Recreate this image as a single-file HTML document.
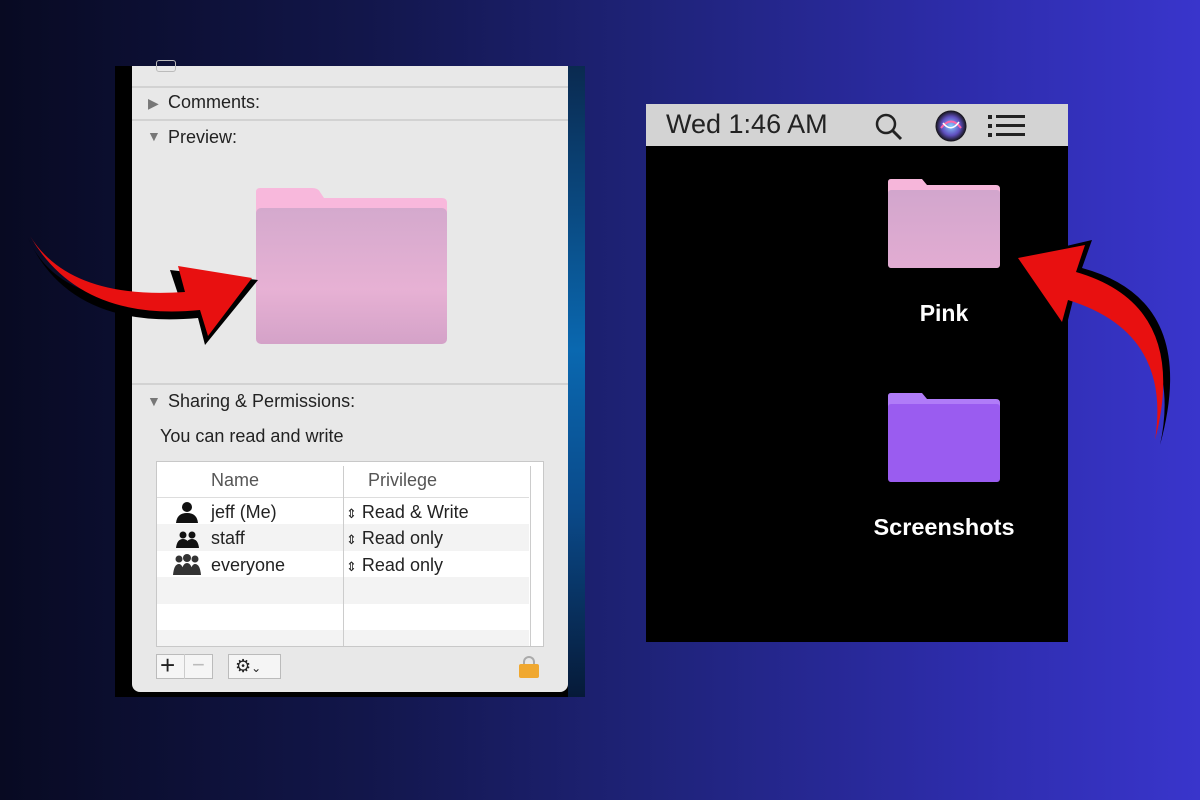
<!DOCTYPE html>
<html><head><style>
*{margin:0;padding:0;box-sizing:border-box}
body{width:1200px;height:800px;overflow:hidden;position:relative;font-family:"Liberation Sans",sans-serif;
background:linear-gradient(90deg,#080a22 0%,#12164a 30%,#1f237a 55%,#2d2caa 80%,#3935cc 100%);}
.abs{position:absolute}
.frame{left:115px;top:66px;width:470px;height:631px;background:#000}
.blue{left:568px;top:66px;width:17px;height:631px;background:linear-gradient(180deg,#0a2a50,#0a68b0 45%,#0a4a8a 70%,#061a38)}
.panel{left:132px;top:66px;width:436px;height:626px;background:#e8e8e8;border-radius:0 0 8px 8px;color:#222;font-size:18px}
.hr{position:absolute;left:0;right:0;height:2px;background:#d2d2d2}
.tri{position:absolute;color:#777;font-size:14px}
.tbl{position:absolute;left:24px;top:395px;width:388px;height:186px;background:#fff;border:1px solid #c8c8c8;overflow:hidden}
.row{position:absolute;left:0;width:372px;height:26.5px}
.menubar{left:646px;top:104px;width:422px;height:42px;background:#d3d3d3;font-size:27px;color:#222}
.desk{left:646px;top:146px;width:422px;height:496px;background:#000}
</style></head><body>
<div class="abs frame"></div>
<div class="abs blue"></div>
<div class="abs panel">
  <div style="position:absolute;left:24px;top:-6px;width:20px;height:12px;border:1px solid #bbb;border-radius:3px"></div>
  <div class="hr" style="top:20px"></div>
  <span class="tri" style="left:16px;top:29px">▶</span><span style="position:absolute;left:36px;top:26px">Comments:</span>
  <div class="hr" style="top:53px"></div>
  <span class="tri" style="left:15px;top:62px">▼</span><span style="position:absolute;left:36px;top:61px">Preview:</span>
  <svg style="position:absolute;left:118px;top:120px" width="200" height="160">
    <defs><linearGradient id="pf" x1="0" y1="0" x2="0" y2="1"><stop offset="0" stop-color="#d4a9cd"/><stop offset=".6" stop-color="#e7b1d4"/><stop offset="1" stop-color="#d4a2c8"/></linearGradient></defs>
    <path d="M6 6 Q6 2 10 2 H62 Q68 2 70 6 L74 12 H192 Q197 12 197 17 V40 H6Z" fill="#f8b8dc"/>
    <rect x="6" y="22" width="191" height="136" rx="5" fill="url(#pf)"/>
  </svg>
  <div class="hr" style="top:317px"></div>
  <span class="tri" style="left:15px;top:327px">▼</span><span style="position:absolute;left:36px;top:325px">Sharing &amp; Permissions:</span>
  <span style="position:absolute;left:28px;top:360px">You can read and write</span>
  <div class="tbl">
    <div style="position:absolute;left:0;top:0;width:372px;height:36px;border-bottom:1px solid #ddd"></div>
    <span style="position:absolute;left:54px;top:8px;color:#555">Name</span>
    <span style="position:absolute;left:211px;top:8px;color:#555">Privilege</span>
    <div class="row" style="top:36px"></div>
    <div class="row" style="top:62px;background:#f3f3f3"></div>
    <div class="row" style="top:89px"></div>
    <div class="row" style="top:115px;background:#f3f3f3"></div>
    <div class="row" style="top:142px"></div>
    <div class="row" style="top:168px;background:#f3f3f3"></div>
    <div style="position:absolute;left:186px;top:4px;width:1px;height:180px;background:#ccc"></div>
    <div style="position:absolute;left:373px;top:4px;width:1px;height:180px;background:#ccc"></div>
    <svg style="position:absolute;left:16px;top:39px" width="30" height="80">
      <circle cx="14" cy="6" r="5" fill="#111"/><path d="M3 22 Q4 12 14 12 Q24 12 25 22Z" fill="#111"/>
      <circle cx="10" cy="34" r="3.5" fill="#111"/><circle cx="19" cy="34" r="3.5" fill="#111"/><path d="M3 47 Q4 38 10 38 Q16 38 17 47Z M12 47 Q13 38 19 38 Q25 38 26 47Z" fill="#111"/>
      <circle cx="6" cy="58" r="3.5" fill="#333"/><circle cx="14" cy="57" r="4" fill="#333"/><circle cx="22" cy="58" r="3.5" fill="#333"/><path d="M0 74 Q1 63 6 63 Q10 63 11 74Z M8 74 Q9 62 14 62 Q19 62 20 74Z M17 74 Q18 63 22 63 Q27 63 28 74Z" fill="#333"/>
    </svg>
    <span style="position:absolute;left:54px;top:40px">jeff (Me)</span>
    <span style="position:absolute;left:54px;top:66px">staff</span>
    <span style="position:absolute;left:54px;top:93px">everyone</span>
    <span style="position:absolute;left:189px;top:40px"><small style="font-size:13px">⇕</small> Read &amp; Write</span>
    <span style="position:absolute;left:189px;top:66px"><small style="font-size:13px">⇕</small> Read only</span>
    <span style="position:absolute;left:189px;top:93px"><small style="font-size:13px">⇕</small> Read only</span>
  </div>
  <div style="position:absolute;left:24px;top:588px;width:57px;height:25px;border:1px solid #bbb;background:#f5f5f5"></div>
  <div style="position:absolute;left:52px;top:588px;width:1px;height:25px;background:#ccc"></div>
  <span style="position:absolute;left:28px;top:584px;font-size:26px;color:#222">+</span>
  <span style="position:absolute;left:60px;top:586px;font-size:22px;color:#bbb">−</span>
  <div style="position:absolute;left:96px;top:588px;width:53px;height:25px;border:1px solid #bbb;background:#f5f5f5;font-size:18px;padding:1px 0 0 6px">⚙<span style="font-size:12px">⌄</span></div>
  <div style="position:absolute;left:387px;top:590px;width:20px;height:22px">
    <div style="position:absolute;left:4px;top:0;width:12px;height:12px;border:2px solid #aaa;border-bottom:none;border-radius:6px 6px 0 0"></div>
    <div style="position:absolute;left:0;top:8px;width:20px;height:14px;background:#f0a830;border-radius:2px"></div>
  </div>
</div>

<div class="abs menubar">
  <span style="position:absolute;left:20px;top:5px">Wed 1:46 AM</span>
  <svg style="position:absolute;left:228px;top:8px" width="30" height="30"><circle cx="12" cy="12" r="9" fill="none" stroke="#222" stroke-width="2.5"/><path d="M18 18 L27 27" stroke="#222" stroke-width="3"/></svg>
  <svg style="position:absolute;left:288px;top:5px" width="34" height="34"><defs><radialGradient id="sr"><stop offset="0" stop-color="#8cf"/><stop offset=".6" stop-color="#6050c0"/><stop offset="1" stop-color="#111"/></radialGradient></defs><circle cx="17" cy="17" r="15.5" fill="url(#sr)"/><path d="M7 19 Q17 6 27 19" stroke="#f6a" stroke-width="2" fill="none"/><path d="M9 14 Q17 24 25 13" stroke="#fff" stroke-width="1.5" fill="none"/></svg>
  <svg style="position:absolute;left:342px;top:10px" width="38" height="24"><g fill="#222"><rect x="0" y="1" width="4" height="4"/><rect x="0" y="10" width="4" height="4"/><rect x="0" y="19" width="4" height="4"/><rect x="8" y="1" width="29" height="3"/><rect x="8" y="10" width="29" height="3"/><rect x="8" y="19" width="29" height="3"/></g></svg>
</div>
<div class="abs desk">
  <svg style="position:absolute;left:240px;top:32px" width="116" height="92"><defs><linearGradient id="pp" x1="0" y1="0" x2="0" y2="1"><stop offset="0" stop-color="#d2a6cd"/><stop offset="1" stop-color="#e2acd2"/></linearGradient></defs><path d="M2 4 Q2 1 5 1 H36 L41 7 H110 Q114 7 114 11 V30 H2Z" fill="#f6b6da"/><rect x="2" y="12" width="112" height="78" rx="3" fill="url(#pp)"/></svg>
  <div style="position:absolute;left:200px;top:154px;width:196px;text-align:center;color:#fff;font-weight:bold;font-size:23px">Pink</div>
  <svg style="position:absolute;left:240px;top:246px" width="116" height="92"><path d="M2 4 Q2 1 5 1 H36 L41 7 H110 Q114 7 114 11 V30 H2Z" fill="#b07cf8"/><rect x="2" y="12" width="112" height="78" rx="3" fill="#9a5cf0"/></svg>
  <div style="position:absolute;left:180px;top:368px;width:236px;text-align:center;color:#fff;font-weight:bold;font-size:23.5px">Screenshots</div>
</div>

<svg class="abs" style="left:0;top:0" width="1200" height="800">
  <path d="M28 238 Q60 310 180 300 L170 270 L258 280 L205 345 L198 318 Q70 330 28 238Z" fill="#000"/>
  <path d="M30 236 Q70 300 185 292 L178 266 L252 278 L208 336 L200 310 Q80 322 30 236Z" fill="#e81010"/>
  <path d="M1160 445 Q1185 330 1075 292 L1068 320 L1015 258 L1092 240 L1082 268 Q1200 300 1160 445Z" fill="#000"/>
  <path d="M1155 440 Q1172 332 1068 300 L1062 322 L1018 258 L1085 245 L1076 272 Q1190 305 1155 440Z" fill="#e81010"/>
</svg>
</body></html>
